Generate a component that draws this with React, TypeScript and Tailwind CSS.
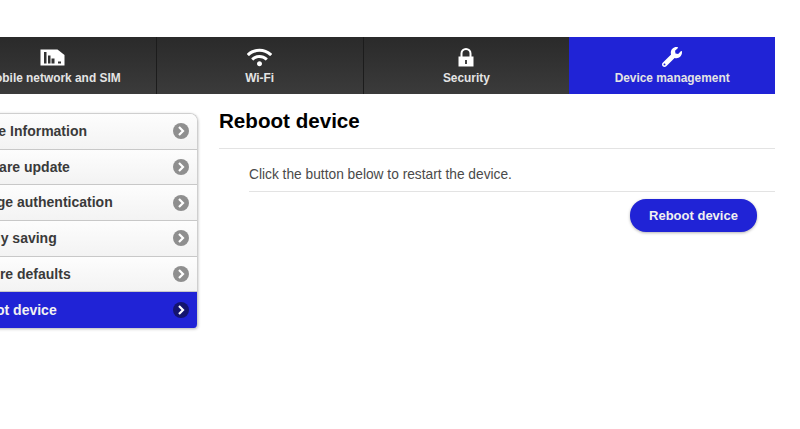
import React from 'react';
import { FaWifi, FaWrench } from 'react-icons/fa';

const SimIcon = () => (
  <svg width="25" height="17" viewBox="0 0 25 17">
    <path d="M0.5 0.5h17l7 5.5v10.5H0.5z" fill="#fff" />
    <path d="M4 3h2.5v11.5H4zM8 6.5h2.5v8H8zM11.5 9.5h3v5h-3zM18 12.5h3v2h-3z" fill="#333" />
  </svg>
);

const LockIcon = () => (
  <svg width="16" height="19" viewBox="0 0 16 19">
    <path d="M3.5 9V5.5a4.5 4.5 0 0 1 9 0V9" fill="none" stroke="#fff" strokeWidth="2" />
    <path d="M0.5 8.5h15V18.5H0.5z" fill="#fff" />
    <path d="M7 12h2v4H7z" fill="#444" />
  </svg>
);

const tabs = [
  { label: 'Mobile network and SIM', icon: <SimIcon /> },
  { label: 'Wi-Fi', icon: <FaWifi className="text-white" size={25} /> },
  { label: 'Security', icon: <LockIcon /> },
  { label: 'Device management', icon: <FaWrench className="text-white" size={20} />, active: true },
];

const menu = [
  { label: 'Device Information' },
  { label: 'Software update' },
  { label: 'Manage authentication' },
  { label: 'Energy saving' },
  { label: 'Restore defaults' },
  { label: 'Reboot device', active: true },
];

const Arrow = ({ active }: { active?: boolean }) => (
  <div
    className={`w-4 h-4 rounded-full flex items-center justify-center ${
      active ? 'bg-[#14146e]' : 'bg-[#8f8f8f]'
    }`}
  >
    <svg width="8" height="10" viewBox="0 0 8 10">
      <path d="M2 1l4 4-4 4" fill="none" stroke="#fff" strokeWidth="2.2" />
    </svg>
  </div>
);

export default function App() {
  return (
    <div className="w-[800px] h-[429px] overflow-hidden bg-white font-['Liberation_Sans',Arial,sans-serif]">
      <div className="w-[825px] -ml-[50px] pt-[37px]">
        {/* Top tabs */}
        <div className="flex h-[57px]">
          {tabs.map((tab, i) => (
            <div
              key={tab.label}
              className={`flex-1 flex flex-col items-center pt-[8px] ${
                tab.active
                  ? 'bg-[#2023d6]'
                  : 'bg-gradient-to-b from-[#2a2a2a] to-[#3b3b3b]'
              } ${i > 0 && !tab.active ? 'border-l border-[#1c1c1c]' : ''}`}
            >
              <div className="h-[24px] flex items-center justify-center">{tab.icon}</div>
              <span className="mt-[1px] text-[11.9px] leading-[16px] font-bold text-[#e4e4e4]">{tab.label}</span>
            </div>
          ))}
        </div>

        <div className="flex mt-[19px]">
          {/* Side menu */}
          <div className="w-[248px] shrink-0 rounded-t-lg rounded-b-sm overflow-hidden border-t border-r border-[#cfcfcf] shadow-[0_1px_3px_rgba(0,0,0,0.3)]">
            {menu.map((item) => (
              <div
                key={item.label}
                className={`h-[35.7px] pl-[11px] pr-[8px] flex items-center justify-between text-[14px] font-bold ${
                  item.active
                    ? 'bg-[#2023d6] text-[#f2f2f2]'
                    : 'bg-gradient-to-b from-[#fdfdfd] to-[#f3f3f3] text-[#3a3a3a] border-b border-[#c8c8c8]'
                }`}
              >
                <span>{item.label}</span>
                <Arrow active={item.active} />
              </div>
            ))}
          </div>

          {/* Content */}
          <div className="ml-[21px] w-[556px]">
            <h1 className="h-[37px] -mt-[1px] text-[20.6px] leading-[18px] font-bold text-black border-b border-[#e3e3e3] flex items-start">
              Reboot device
            </h1>
            <div className="ml-[30px]">
              <p className="h-[43px] pt-[11px] flex items-center text-[13.75px] text-[#4a4a4a] border-b border-[#e3e3e3]">
                Click the button below to restart the device.
              </p>
              <div className="flex justify-end pr-[18px] pt-[7px]">
                <button className="w-[127px] h-[33px] rounded-[16px] bg-[#2023d6] text-[13px] font-bold text-[#f0f0f0] shadow-[0_1px_3px_rgba(0,0,0,0.3)]">
                  Reboot device
                </button>
              </div>
            </div>
          </div>
        </div>
      </div>
    </div>
  );
}
